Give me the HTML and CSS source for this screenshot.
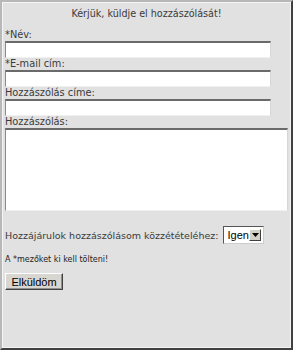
FILE: index.html
```html
<!DOCTYPE html>
<html lang="hu">
<head>
<meta charset="utf-8">
<link rel="stylesheet" href="styles.css">
</head>
<body>
<div class="frame">
  <form class="form">
    <div class="title">Kérjük, küldje el hozzászólását!</div>
    <label class="lbl first">*Név:</label>
    <input class="field" type="text">
    <label class="lbl">*E-mail cím:</label>
    <input class="field" type="text">
    <label class="lbl">Hozzászólás címe:</label>
    <input class="field" type="text">
    <label class="lbl">Hozzászólás:</label>
    <textarea class="area"></textarea>
    <div class="consent">
      <span>Hozzájárulok hozzászólásom közzétételéhez:</span>
      <span class="select"><span class="sel-text">Igen</span><span class="sel-btn"><svg width="7" height="4" viewBox="0 0 7 4"><path d="M0 0h7L3.5 4z" fill="#000"/></svg></span></span>
    </div>
    <div class="note">A *mezőket ki kell tölteni!</div>
    <div class="actions"><button type="button" class="btn">Elküldöm</button></div>
  </form>
</div>
</body>
</html>
```
FILE: styles.css
```css
html, body {
  margin: 0;
  padding: 0;
  background: #ffffff;
}
.frame {
  box-sizing: border-box;
  width: 293px;
  height: 350px;
  background: #e1e1e1;
  border-style: solid;
  border-width: 2px;
  border-color: #b8b8b8 #404040 #404040 #b8b8b8;
  box-shadow: inset 1px 1px 0 #f4f4f4, inset -1px -1px 0 #f4f4f4;
  font-family: "DejaVu Sans", Verdana, sans-serif;
  font-size: 10px;
  color: #3a3a3a;
}
.form {
  display: flex;
  flex-direction: column;
  align-items: flex-start;
  padding: 6px 3px 0 3px;
}
.title {
  align-self: stretch;
  text-align: center;
  font-size: 9.6px;
  line-height: 12px;
  color: #3a3a3a;
}
.lbl {
  line-height: 12px;
  margin-top: 0;
  font-size: 9.8px;
  color: #3a3a3a;
}
.lbl.first {
  margin-top: 9px;
}
.field {
  box-sizing: border-box;
  width: 266px;
  height: 17px;
  margin: 0;
  padding: 0;
  background: #fff;
  border-style: solid;
  border-width: 2px 1px 1px 1px;
  border-color: #6a6a6a #d6d6d6 #f0f0f0 #8a8a8a;
}
.area {
  box-sizing: border-box;
  width: 283px;
  height: 83px;
  margin: 0;
  padding: 0;
  resize: none;
  background: #fff;
  border-style: solid;
  border-width: 2px 1px 1px 1px;
  border-color: #6a6a6a #d6d6d6 #f0f0f0 #8a8a8a;
}
.consent {
  display: flex;
  align-items: center;
  gap: 5px;
  margin-top: 15px;
  font-size: 9.5px;
  color: #3a3a3a;
}
.select {
  display: flex;
  align-items: center;
  box-sizing: border-box;
  width: 41px;
  height: 18px;
  background: #fff;
  border: 1px solid;
  border-color: #555 #ccc #ccc #555;
  font-family: "Liberation Sans", Arial, sans-serif;
  font-size: 11px;
  color: #000;
}
.sel-text {
  flex: 1;
  padding-left: 3px;
}
.sel-btn {
  display: flex;
  align-items: center;
  justify-content: center;
  width: 12px;
  height: 12px;
  margin-right: 2px;
  background: #d4d0c8;
  border: 1px solid;
  border-color: #fff #404040 #404040 #fff;
  box-sizing: border-box;
}
.note {
  margin-top: 11px;
  font-size: 8px;
  line-height: 10px;
  color: #222222;
}
.actions {
  margin-top: 8px;
}
.btn {
  box-sizing: border-box;
  width: 58px;
  height: 17px;
  margin: 0;
  padding: 0;
  background: #d8d6d0;
  border: 1px solid;
  border-color: #fff #404040 #404040 #fff;
  box-shadow: inset -1px -1px 0 #909090;
  font-family: "Liberation Sans", Arial, sans-serif;
  font-size: 11px;
  color: #000;
}
```
